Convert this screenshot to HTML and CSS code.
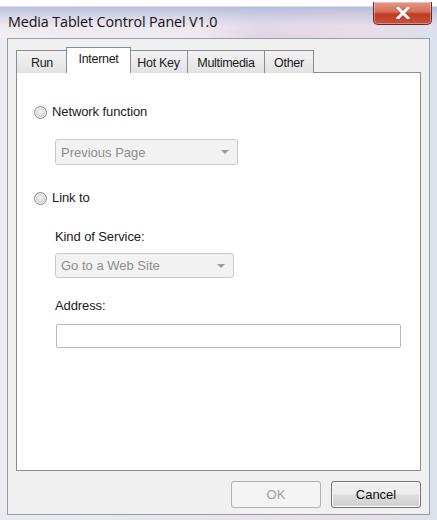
FILE: index.html
```html
<!DOCTYPE html>
<html>
<head>
<meta charset="utf-8">
<link rel="stylesheet" href="styles.css">
</head>
<body>
<div class="window">
  <div class="titlebar">
    <span class="title">Media Tablet Control Panel V1.0</span>
    <div class="close">
      <svg width="16" height="12" viewBox="0 0 16 12"><path d="M3 1 L13 11 M13 1 L3 11" stroke="#7a2a20" stroke-width="4.4" stroke-linecap="square" opacity="0.35"/><path d="M3 1 L13 11 M13 1 L3 11" stroke="#fff" stroke-width="3" stroke-linecap="square"/></svg>
    </div>
  </div>
  <div class="client">
    <div class="tabs">
      <div class="tab">Run</div>
      <div class="tab active">Internet</div>
      <div class="tab">Hot Key</div>
      <div class="tab">Multimedia</div>
      <div class="tab">Other</div>
    </div>
    <div class="panel">
      <label class="radio-row r1"><span class="radio"></span>Network function</label>
      <div class="combo c1"><span>Previous Page</span><span class="arrow"></span></div>
      <label class="radio-row r2"><span class="radio"></span>Link to</label>
      <div class="label l1">Kind of Service:</div>
      <div class="combo c2"><span>Go to a Web Site</span><span class="arrow"></span></div>
      <div class="label l2">Address:</div>
      <div class="input"></div>
    </div>
    <div class="buttons">
      <div class="btn disabled">OK</div>
      <div class="btn">Cancel</div>
    </div>
  </div>
</div>
</body>
</html>
```

FILE: styles.css
```css
html, body {
  margin: 0;
  padding: 0;
  background: #ffffff;
}
body {
  width: 437px;
  height: 520px;
  overflow: hidden;
  font-family: "Liberation Sans", Arial, sans-serif;
  font-size: 13px;
  color: #1a1a1a;
}
.window {
  box-sizing: border-box;
  width: 437px;
  height: 520px;
  padding: 0 7px 5px 7px;
  background: linear-gradient(to right, #e9ebf1 0%, #e6e4ec 50%, #e9dfe8 75%, #dde2ec 100%);
  display: flex;
  flex-direction: column;
}
.titlebar {
  height: 38px;
  display: flex;
  justify-content: space-between;
  align-items: flex-start;
  flex: none;
  margin: 0 -7px;
  padding: 0 7px;
  background:
    linear-gradient(to bottom, #ffffff 0px, #ffffff 6px, rgba(255,255,255,0) 7px),
    linear-gradient(to bottom, rgba(176,186,218,0.9) 7px, rgba(200,196,224,0.6) 16px, rgba(236,222,236,0.4) 26px, rgba(236,228,238,0) 38px),
    linear-gradient(to right, #f1f0f4 0%, #eeebf1 45%, #dcd6e6 60%, #e8dbe7 80%, #d9e0ec 100%);
}
.title {
  font-family: "Open Sans", "Noto Sans", sans-serif;
  font-size: 14.3px;
  color: #111;
  margin-top: 12px;
  margin-left: 1px;
  letter-spacing: -0.1px;
}
.close {
  width: 57px;
  height: 22px;
  margin-top: 2px;
  margin-right: -2px;
  border: 1px solid #6d2a22;
  border-top: none;
  border-radius: 0 0 5px 5px;
  background: linear-gradient(to bottom, #e39a8a 0%, #d66d58 45%, #bf3a25 55%, #c8503a 100%);
  display: flex;
  align-items: center;
  justify-content: center;
  box-shadow: inset 0 0 0 1px rgba(255,255,255,0.35);
}
.client {
  flex: 1;
  background: #f0f0f0;
  border: 1px solid #9a9ca4;
  display: flex;
  flex-direction: column;
  padding: 0 8px 0 8px;
}
.tabs {
  display: flex;
  align-items: flex-end;
  margin-top: 8px;
  height: 26px;
  position: relative;
  z-index: 2;
  margin-bottom: -1px;
}
.tab {
  box-sizing: border-box;
  height: 23px;
  border: 1px solid #898c95;
  border-bottom: none;
  margin-right: -1px;
  background: linear-gradient(to bottom, #f3f3f3, #e2e2e2);
  font-size: 12.5px;
  letter-spacing: -0.3px;
  display: flex;
  align-items: center;
  justify-content: center;
  padding-top: 2px;
}
.tab:nth-child(1) { width: 52px; }
.tab:nth-child(2) { width: 64px; }
.tab:nth-child(3) { width: 59px; }
.tab:nth-child(4) { width: 78px; }
.tab:nth-child(5) { width: 50px; }
.tab.active {
  height: 26px;
  background: #ffffff;
  padding-top: 0;
  padding-bottom: 4px;
  margin-left: -1px;
  margin-right: -2px;
  width: 65px;
  position: relative;
  z-index: 3;
}
.panel {
  box-sizing: border-box;
  height: 399px;
  background: #ffffff;
  border: 1px solid #898c95;
  padding: 31px 18px 0 17px;
  display: flex;
  flex-direction: column;
  align-items: flex-start;
}
.radio-row {
  display: flex;
  align-items: center;
  height: 16px;
  line-height: 16px;
  font-size: 13px;
  letter-spacing: -0.1px;
}
.radio {
  box-sizing: border-box;
  width: 13px;
  height: 13px;
  border-radius: 50%;
  border: 1px solid #8b8b8b;
  background: radial-gradient(circle at 50% 45%, #f4f4f4 0%, #dcdcdc 45%, #c4c4c4 70%, #e8e8e8 100%);
  margin-right: 5px;
  box-shadow: inset 0 0 0 1px #f6f6f6;
}
.combo {
  box-sizing: border-box;
  height: 26px;
  margin-left: 21px;
  border: 1px solid #c9c9c9;
  border-radius: 3px;
  background: #f2f2f2;
  color: #8d8d8d;
  display: flex;
  align-items: center;
  justify-content: space-between;
  padding: 0 8px 0 5px;
  font-size: 13px;
}
.arrow {
  width: 0;
  height: 0;
  border-left: 4px solid transparent;
  border-right: 4px solid transparent;
  border-top: 4px solid #9c9c9c;
}
.c1 { width: 183px; margin-top: 19px; }
.r2 { margin-top: 25px; }
.label {
  margin-left: 21px;
  height: 16px;
  line-height: 16px;
  font-size: 13px;
  letter-spacing: -0.1px;
}
.l1 { margin-top: 23px; }
.c2 { width: 179px; height: 25px; margin-top: 8px; }
.l2 { margin-top: 20px; }
.input {
  box-sizing: border-box;
  margin-left: 22px;
  margin-top: 10px;
  width: 345px;
  height: 24px;
  border: 1px solid #b5b8be;
  border-radius: 2px;
  background: #fff;
}
.buttons {
  display: flex;
  justify-content: flex-end;
  gap: 10px;
  margin-top: 10px;
}
.btn {
  box-sizing: border-box;
  width: 90px;
  height: 27px;
  border: 1px solid #707070;
  border-radius: 3px;
  background: linear-gradient(to bottom, #f2f2f2 0%, #ebebeb 48%, #dddddd 52%, #cfcfcf 100%);
  display: flex;
  align-items: center;
  justify-content: center;
  font-size: 13px;
  color: #111;
  box-shadow: inset 0 0 0 1px #fbfbfb;
}
.btn.disabled {
  border-color: #adb2b5;
  background: #f4f4f4;
  color: #a0a0a0;
  box-shadow: none;
}
```
